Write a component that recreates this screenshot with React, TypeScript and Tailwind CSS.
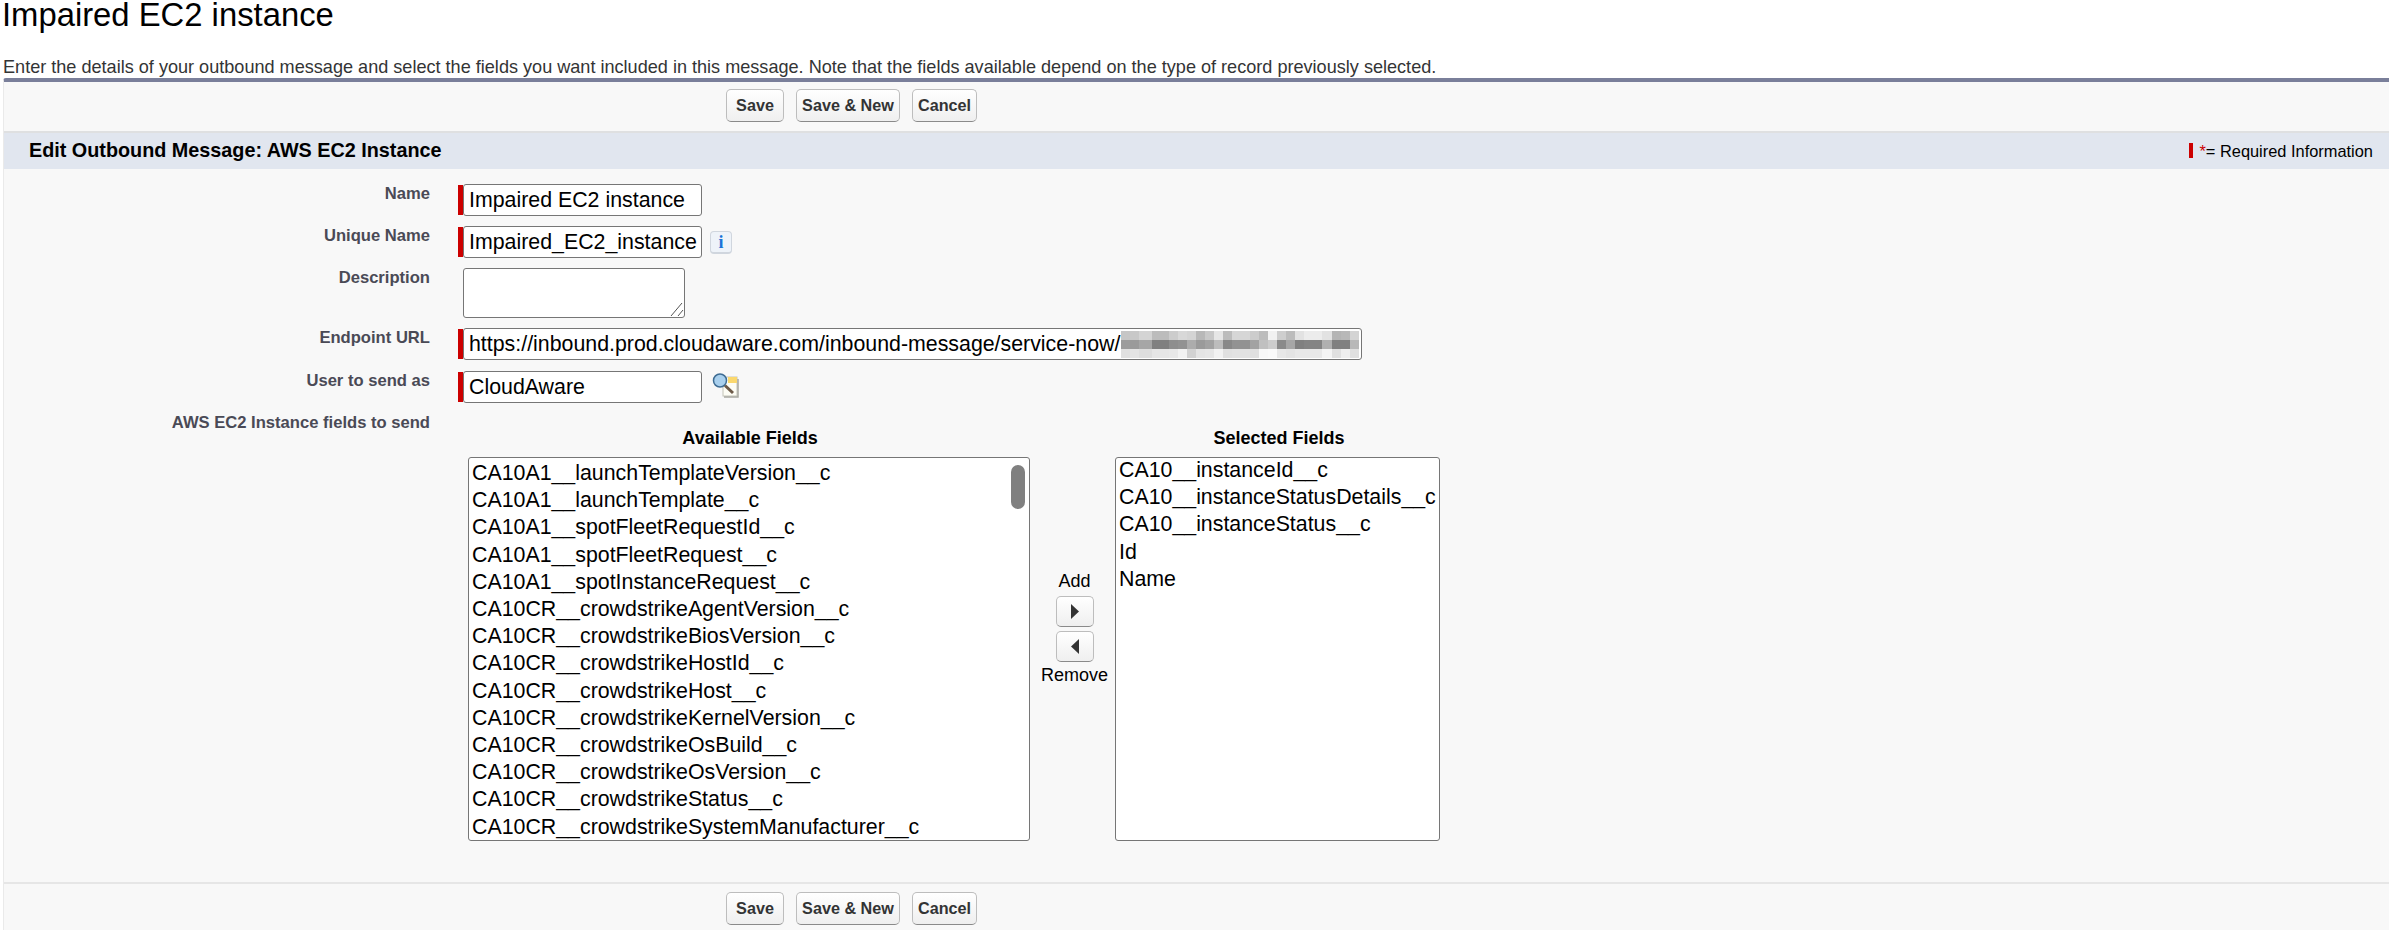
import React from 'react';

const availableFields = [
  'CA10A1__launchTemplateVersion__c',
  'CA10A1__launchTemplate__c',
  'CA10A1__spotFleetRequestId__c',
  'CA10A1__spotFleetRequest__c',
  'CA10A1__spotInstanceRequest__c',
  'CA10CR__crowdstrikeAgentVersion__c',
  'CA10CR__crowdstrikeBiosVersion__c',
  'CA10CR__crowdstrikeHostId__c',
  'CA10CR__crowdstrikeHost__c',
  'CA10CR__crowdstrikeKernelVersion__c',
  'CA10CR__crowdstrikeOsBuild__c',
  'CA10CR__crowdstrikeOsVersion__c',
  'CA10CR__crowdstrikeStatus__c',
  'CA10CR__crowdstrikeSystemManufacturer__c',
];

const selectedFields = ['CA10__instanceId__c', 'CA10__instanceStatusDetails__c', 'CA10__instanceStatus__c', 'Id', 'Name'];

// width of each mosaic column, then its top / middle / bottom greys
const mosaic: [number, string, string, string][] = [
  [9, '#c6c6c6', '#9c9c9c', '#e0e0e0'],
  [9, '#c8c8c8', '#9a9a9a', '#e4e4e4'],
  [13, '#d4d4d4', '#a6a6a6', '#dedede'],
  [17, '#bcbcbc', '#808080', '#e6e6e6'],
  [9, '#cccccc', '#8e8e8e', '#e8e8e8'],
  [9, '#d8d8d8', '#929292', '#f2f2f2'],
  [9, '#d4d4d4', '#acacac', '#d2d2d2'],
  [9, '#b8b8b8', '#9a9a9a', '#e4e4e4'],
  [9, '#c8c8c8', '#a2a2a2', '#e6e6e6'],
  [9, '#e6e6e6', '#bcbcbc', '#f2f2f2'],
  [9, '#bcbcbc', '#888888', '#e0e0e0'],
  [18, '#d6d6d6', '#929292', '#e2e2e2'],
  [9, '#cccccc', '#a2a2a2', '#e0e0e0'],
  [9, '#bcbcbc', '#c0c0c0', '#f8f8f8'],
  [9, '#f2f2f2', '#cccccc', '#fafafa'],
  [9, '#cecece', '#8a8a8a', '#e8e8e8'],
  [9, '#bcbcbc', '#a6a6a6', '#e4e4e4'],
  [9, '#e2e2e2', '#808080', '#e8e8e8'],
  [18, '#ececec', '#848484', '#e8e8e8'],
  [10, '#e2e2e2', '#b0b0b0', '#f4f4f4'],
  [9, '#b4b4b4', '#808080', '#e0e0e0'],
  [9, '#b8b8b8', '#808080', '#eeeeee'],
  [9, '#d4d4d4', '#b8b8b8', '#e0e0e0'],
];

const Btn: React.FC<{ label: string; width: string }> = ({ label, width }) => (
  <button className={`${width} h-[33px] rounded-[5px] border border-[#bdbdbd] border-b-[#8a8a8a] bg-gradient-to-b from-[#ffffff] to-[#efefef] text-[16.2px] font-bold text-[#333435]`}>
    {label}
  </button>
);

const ButtonRow: React.FC<{ className: string }> = ({ className }) => (
  <div className={`flex gap-3 pl-[722px] ${className}`}>
    <Btn label="Save" width="w-[58px]" />
    <Btn label="Save & New" width="w-[104px]" />
    <Btn label="Cancel" width="w-[65px]" />
  </div>
);

const Row: React.FC<{ label: string; className: string; children: React.ReactNode }> = ({ label, className, children }) => (
  <div className={`flex ${className}`}>
    <div className="w-[426px] pt-px text-right text-[16.6px] font-bold leading-[18px] text-[#4a4a56]">{label}</div>
    <div className="ml-[28px] flex items-start">{children}</div>
  </div>
);

const Field: React.FC<{ value?: string; width: string; children?: React.ReactNode }> = ({ value, width, children }) => (
  <div className="flex h-[32px] items-center">
    <div className="h-[30px] w-[5px] bg-[#cc0000]" />
    <div className={`${width} flex h-[32px] items-center overflow-hidden whitespace-nowrap rounded-[3px] border border-[#767676] bg-white pl-[5px] text-[21.35px] text-black`}>
      {children ?? value}
    </div>
  </div>
);

const ArrowBtn: React.FC<{ d: string; className: string }> = ({ d, className }) => (
  <button className={`${className} flex h-[31px] w-[38px] items-center justify-center rounded-[5px] border border-[#bdbdbd] border-b-[#8a8a8a] bg-gradient-to-b from-[#ffffff] to-[#efefef]`}>
    <svg className="h-[15px] w-[10px]" viewBox="0 0 10 15"><path d={d} fill="#333" /></svg>
  </button>
);

const App: React.FC = () => {
  return (
    <div className="h-[930px] w-[2389px] overflow-hidden bg-white font-['Liberation_Sans',Arial,sans-serif]">
      <h1 className="h-[30px] pl-[2px] text-[32.8px] leading-[29px] text-black">Impaired EC2 instance</h1>
      <p className="mt-[27px] pl-[3px] text-[18.1px] leading-[20px] text-[#333435]">
        Enter the details of your outbound message and select the fields you want included in this message. Note that the fields available depend on the type of record previously selected.
      </p>

      <div className="ml-[3px] mt-px h-[852px] rounded-tl-[3px] border-l border-t-[4px] border-l-[#eaeaea] border-t-[#7a7f9a] bg-[#f8f8f8]">
        <ButtonRow className="pb-[9px] pt-[7px]" />
        <div className="border-t-2 border-[#dfe0e1]" />
        <div className="flex h-[36px] items-center justify-between bg-[#e1e6ef] pl-[25px] pr-[16px]">
          <h2 className="text-[19.8px] font-bold text-black">Edit Outbound Message: AWS EC2 Instance</h2>
          <div className="flex items-center text-[16.4px] text-black">
            <span className="mr-[6px] h-[15px] w-[4px] bg-[#cc0000]" />
            <span className="text-[#cc0000]">*</span>= Required Information
          </div>
        </div>

        <div className="pt-[15px]">
          <Row label="Name" className="h-[42px]">
            <Field value="Impaired EC2 instance" width="w-[239px]" />
          </Row>
          <Row label="Unique Name" className="h-[42px]">
            <Field value="Impaired_EC2_instance" width="w-[239px]" />
            <div className="ml-[8px] mt-[5px] flex h-[23px] w-[22px] items-center justify-center rounded-[4px] border border-[#d0d6de] border-b-2 bg-[#eef3f9] font-['Liberation_Serif',serif] text-[18px] font-bold text-[#1a73d8]">
              i
            </div>
          </Row>
          <Row label="Description" className="h-[60px]">
            <div className="relative ml-[5px] h-[50px] w-[222px] rounded-[3px] border border-[#767676] bg-white">
              <svg className="absolute bottom-0 right-0 h-[16px] w-[16px]" viewBox="0 0 16 16">
                <path d="M3 15 L14 2 M10 15 L15 9" stroke="#555" strokeWidth="1" fill="none" />
              </svg>
            </div>
          </Row>
          <Row label="Endpoint URL" className="h-[43px]">
            <Field width="w-[899px]">
              https://inbound.prod.cloudaware.com/inbound-message/service-now/
              <div className="ml-[1px] flex h-[27px] shrink-0 overflow-hidden">
                {mosaic.map(([w, top, mid, bottom], i) => (
                  <div key={i} className="flex flex-col" style={{ width: w }}>
                    <div className="h-[9px]" style={{ background: top }} />
                    <div className="h-[9px]" style={{ background: mid }} />
                    <div className="h-[9px]" style={{ background: bottom }} />
                  </div>
                ))}
              </div>
            </Field>
          </Row>
          <Row label="User to send as" className="h-[41px]">
            <Field value="CloudAware" width="w-[239px]" />
            <svg className="ml-[10px] mt-[2px] h-[25px] w-[27px]" viewBox="0 0 27 25">
              <rect x="11" y="4" width="14" height="19" fill="#fdfdf5" stroke="#c4c4b8" />
              <rect x="16" y="4" width="9" height="6" fill="#fbd86d" />
              <path d="M26 6 V24 H12" stroke="#a8a8a0" strokeWidth="1.5" fill="none" />
              <circle cx="8" cy="7.5" r="6.5" fill="#a9d0ee" stroke="#3e6c93" strokeWidth="1.5" />
              <path d="M13 12.5 L21 20" stroke="#6d5a48" strokeWidth="3" />
            </svg>
          </Row>

          <div className="flex">
            <div className="w-[426px] pt-[2px] text-right text-[16.6px] font-bold leading-[18px] text-[#4a4a56]">AWS EC2 Instance fields to send</div>
            <div className="ml-[38px]">
              <div className="flex pt-[17px]">
                <div className="w-[562px] pl-[2px] text-center text-[18px] font-bold leading-[18px] text-black">Available Fields</div>
                <div className="ml-[85px] w-[325px] pl-[3px] text-center text-[18px] font-bold leading-[18px] text-black">Selected Fields</div>
              </div>
              <div className="mt-[10px] flex">
                <div className="relative h-[384px] w-[562px] overflow-hidden rounded-[3px] border border-[#767676] bg-white pl-[3px] pt-[2px] text-[21.35px] leading-[27.2px] text-black">
                  {availableFields.map(f => <div key={f}>{f}</div>)}
                  <div className="absolute right-[4px] top-[7px] h-[44px] w-[14px] rounded-full bg-[#808080]" />
                </div>
                <div className="flex w-[85px] flex-col items-center pl-1 pt-[115px] text-[18px] leading-[18px] text-black">
                  <span>Add</span>
                  <ArrowBtn className="mt-[6px]" d="M1 0 L9 7.5 L1 15 Z" />
                  <ArrowBtn className="mt-[4px]" d="M9 0 L1 7.5 L9 15 Z" />
                  <span className="mt-[4px]">Remove</span>
                </div>
                <div className="h-[384px] w-[325px] overflow-hidden rounded-[3px] border border-[#767676] bg-white pl-[3px] text-[21.35px] leading-[27.2px] text-black">
                  <div className="-mt-[1px]">
                    {selectedFields.map(f => <div key={f}>{f}</div>)}
                  </div>
                </div>
              </div>
            </div>
          </div>
        </div>

        <div className="mt-[41px] border-t-2 border-[#e6e6e6]" />
        <ButtonRow className="pt-[8px]" />
      </div>
    </div>
  );
};

export default App;
